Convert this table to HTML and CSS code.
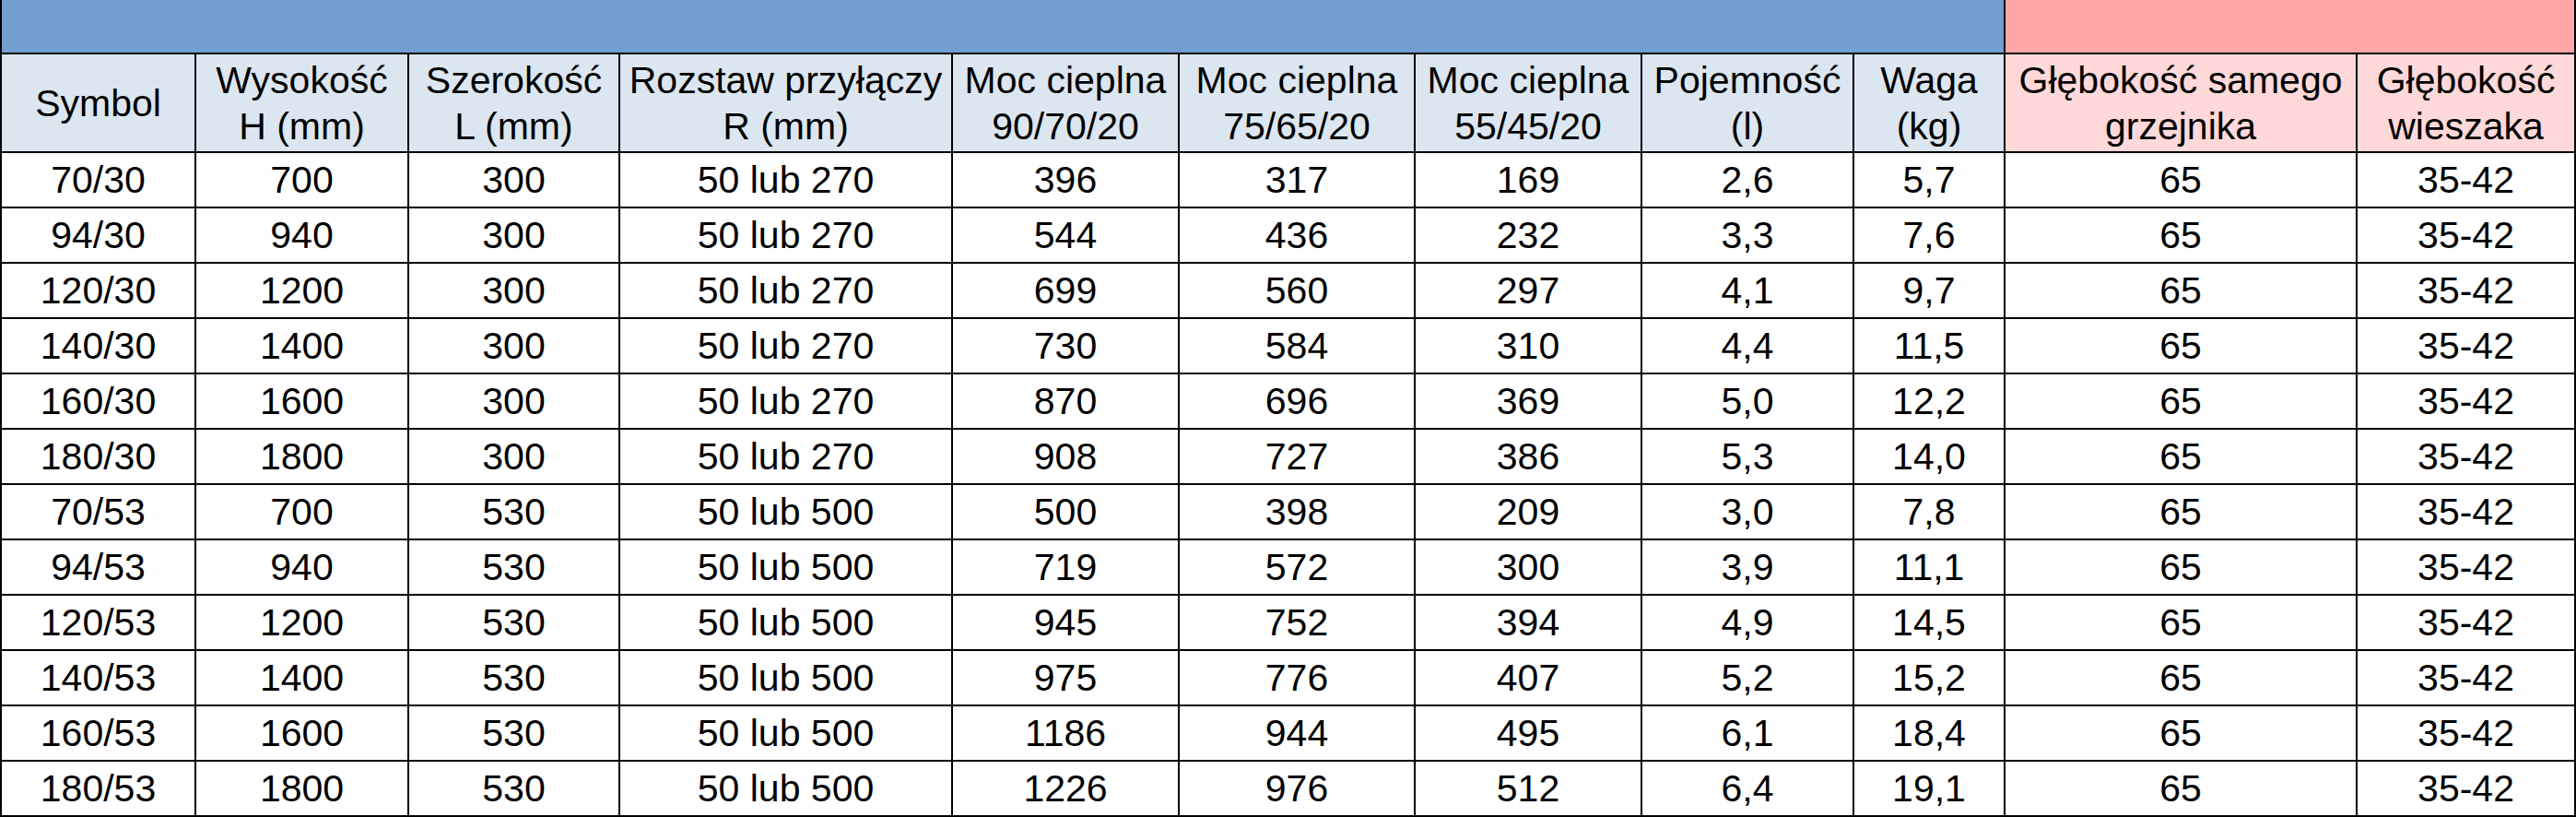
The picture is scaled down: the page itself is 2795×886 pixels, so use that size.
FILE: index.html
```html
<!DOCTYPE html>
<html lang="pl">
<head>
<meta charset="utf-8">
<title>Tabela grzejników</title>
<link rel="stylesheet" href="styles.css">
</head>
<body>
<table class="spec">
  <colgroup>
    <col class="c1"><col class="c2"><col class="c3"><col class="c4"><col class="c5"><col class="c6">
    <col class="c7"><col class="c8"><col class="c9"><col class="c10"><col class="c11">
  </colgroup>
  <thead>
    <tr class="band">
      <th colspan="9" class="band-blue"></th>
      <th colspan="2" class="band-pink"></th>
    </tr>
    <tr class="head">
      <th class="hb">Symbol</th>
      <th class="hb">Wysokość<br>H (mm)</th>
      <th class="hb">Szerokość<br>L (mm)</th>
      <th class="hb">Rozstaw przyłączy<br>R (mm)</th>
      <th class="hb">Moc cieplna<br>90/70/20</th>
      <th class="hb">Moc cieplna<br>75/65/20</th>
      <th class="hb">Moc cieplna<br>55/45/20</th>
      <th class="hb">Pojemność<br>(l)</th>
      <th class="hb">Waga<br>(kg)</th>
      <th class="hp">Głębokość samego<br>grzejnika</th>
      <th class="hp">Głębokość<br>wieszaka</th>
    </tr>
  </thead>
  <tbody>
    <tr><td>70/30</td><td>700</td><td>300</td><td>50 lub 270</td><td>396</td><td>317</td><td>169</td><td>2,6</td><td>5,7</td><td>65</td><td>35-42</td></tr>
    <tr><td>94/30</td><td>940</td><td>300</td><td>50 lub 270</td><td>544</td><td>436</td><td>232</td><td>3,3</td><td>7,6</td><td>65</td><td>35-42</td></tr>
    <tr><td>120/30</td><td>1200</td><td>300</td><td>50 lub 270</td><td>699</td><td>560</td><td>297</td><td>4,1</td><td>9,7</td><td>65</td><td>35-42</td></tr>
    <tr><td>140/30</td><td>1400</td><td>300</td><td>50 lub 270</td><td>730</td><td>584</td><td>310</td><td>4,4</td><td>11,5</td><td>65</td><td>35-42</td></tr>
    <tr><td>160/30</td><td>1600</td><td>300</td><td>50 lub 270</td><td>870</td><td>696</td><td>369</td><td>5,0</td><td>12,2</td><td>65</td><td>35-42</td></tr>
    <tr><td>180/30</td><td>1800</td><td>300</td><td>50 lub 270</td><td>908</td><td>727</td><td>386</td><td>5,3</td><td>14,0</td><td>65</td><td>35-42</td></tr>
    <tr><td>70/53</td><td>700</td><td>530</td><td>50 lub 500</td><td>500</td><td>398</td><td>209</td><td>3,0</td><td>7,8</td><td>65</td><td>35-42</td></tr>
    <tr><td>94/53</td><td>940</td><td>530</td><td>50 lub 500</td><td>719</td><td>572</td><td>300</td><td>3,9</td><td>11,1</td><td>65</td><td>35-42</td></tr>
    <tr><td>120/53</td><td>1200</td><td>530</td><td>50 lub 500</td><td>945</td><td>752</td><td>394</td><td>4,9</td><td>14,5</td><td>65</td><td>35-42</td></tr>
    <tr><td>140/53</td><td>1400</td><td>530</td><td>50 lub 500</td><td>975</td><td>776</td><td>407</td><td>5,2</td><td>15,2</td><td>65</td><td>35-42</td></tr>
    <tr><td>160/53</td><td>1600</td><td>530</td><td>50 lub 500</td><td>1186</td><td>944</td><td>495</td><td>6,1</td><td>18,4</td><td>65</td><td>35-42</td></tr>
    <tr><td>180/53</td><td>1800</td><td>530</td><td>50 lub 500</td><td>1226</td><td>976</td><td>512</td><td>6,4</td><td>19,1</td><td>65</td><td>35-42</td></tr>
  </tbody>
</table>
</body>
</html>
```

FILE: styles.css
```css
html, body {
  margin: 0;
  padding: 0;
  background: #ffffff;
}

.spec {
  border-collapse: collapse;
  table-layout: fixed;
  width: 2793px;
  font-family: "Liberation Sans", Arial, sans-serif;
  font-size: 41px;
  color: #000;
}

.c1 { width: 211px; }
.c2 { width: 231px; }
.c3 { width: 229px; }
.c4 { width: 361px; }
.c5 { width: 246px; }
.c6 { width: 256px; }
.c7 { width: 246px; }
.c8 { width: 230px; }
.c9 { width: 164px; }
.c10 { width: 382px; }
.c11 { width: 237px; }

.spec th,
.spec td {
  border: 2px solid #000;
  padding: 0;
  text-align: center;
  vertical-align: middle;
  font-weight: normal;
  white-space: nowrap;
  overflow: hidden;
}

.band {
  height: 58px;
}

.band th {
  border-top: none;
}

.band-blue { background: #729fcf; }
.band-pink { background: #ffa6a6; }

.head {
  height: 107px;
}

.head th {
  line-height: 50px;
}

.hb { background: #dce6f1; }
.hp { background: #ffd9d9; }

.spec tbody tr {
  height: 60px;
}

.spec tbody td {
  line-height: 44px;
}
```
